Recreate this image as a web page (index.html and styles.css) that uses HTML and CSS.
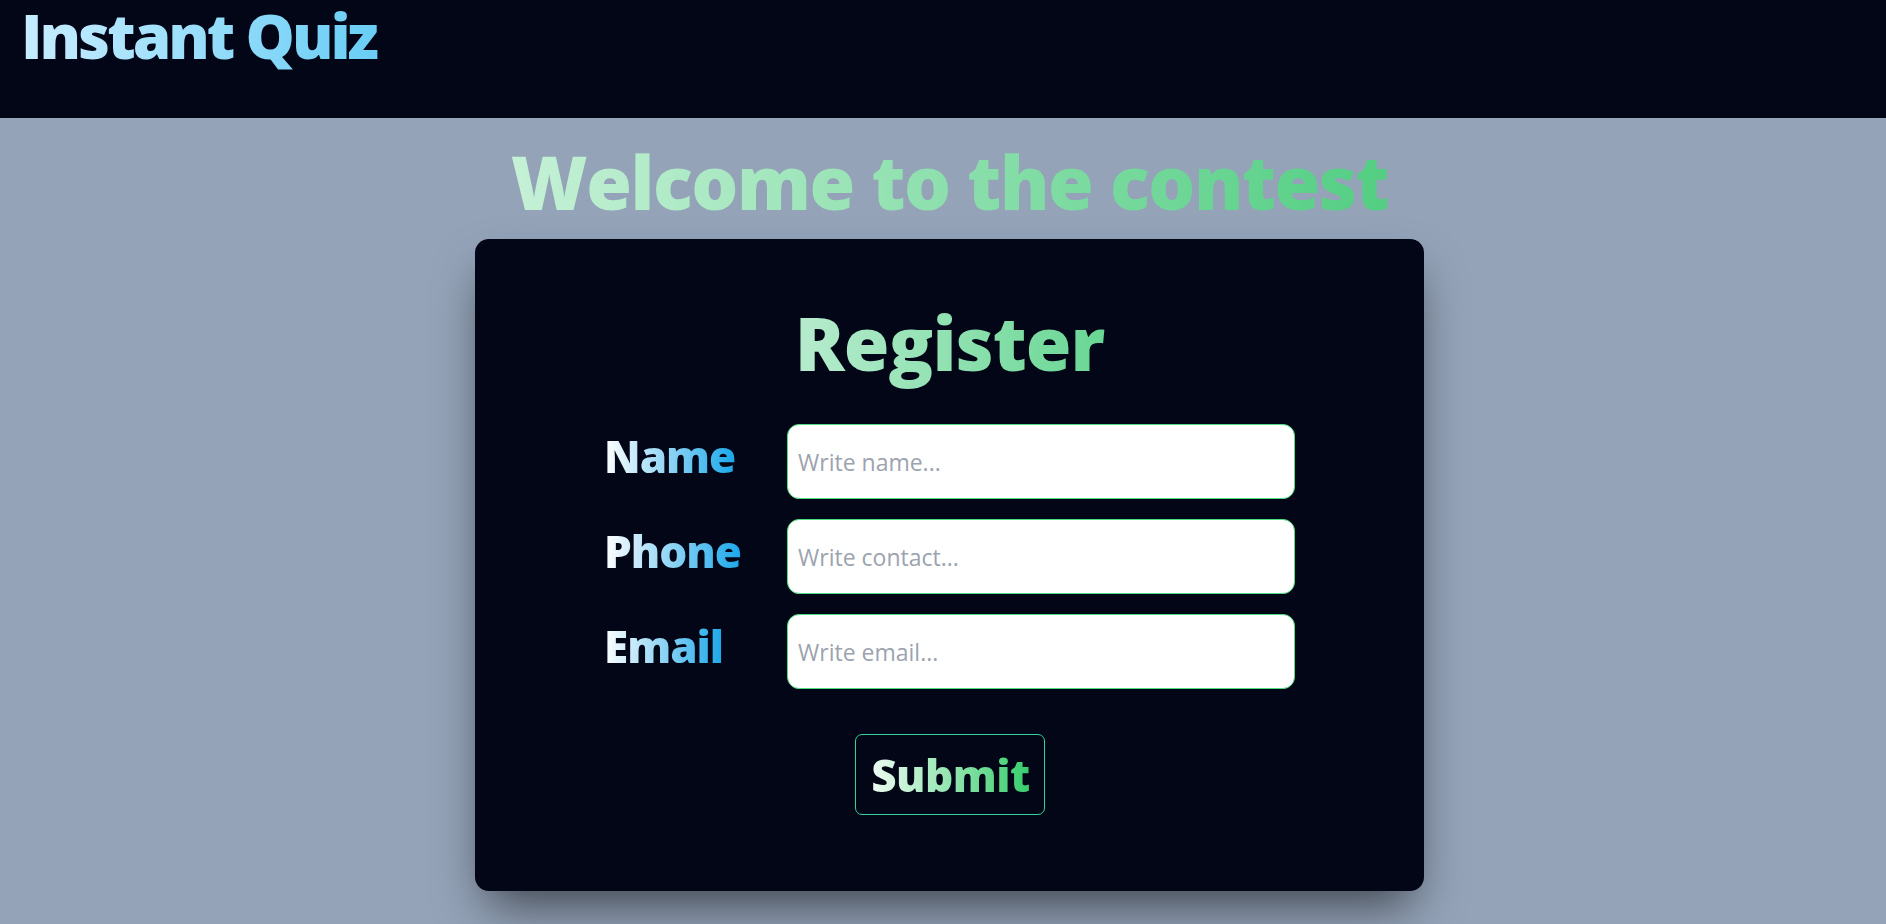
FILE: index.html
```html
<!DOCTYPE html>
<html lang="en">
<head>
<meta charset="utf-8">
<title>Instant Quiz</title>
<link rel="stylesheet" href="styles.css">
</head>
<body>
<header class="topbar">
  <h1 class="brand">Instant Quiz</h1>
</header>
<main class="main">
  <h2 class="welcome">Welcome to the contest</h2>
  <section class="card">
    <h2 class="card-title">Register</h2>
    <form class="form">
      <label class="label" for="name">Name</label>
      <input class="field" id="name" type="text" placeholder="Write name...">
      <label class="label" for="phone">Phone</label>
      <input class="field" id="phone" type="text" placeholder="Write contact...">
      <label class="label" for="email">Email</label>
      <input class="field" id="email" type="text" placeholder="Write email...">
    </form>
    <button class="submit" type="button"><span class="submit-text">Submit</span></button>
  </section>
</main>
</body>
</html>
```
FILE: styles.css
```css
* { box-sizing: border-box; }

body {
  margin: 0;
  background: #94a3b8;
  font-family: "Open Sans", "Noto Sans", sans-serif;
  min-height: 924px;
}

.topbar {
  height: 118px;
  background: #020617;
  padding: 4px 0 0 21px;
}

.brand {
  margin: 0;
  display: inline-block;
  font-size: 62px;
  line-height: 1;
  padding: 0 6px 14px 0;
  font-weight: 800;
  letter-spacing: -3px;
  background: linear-gradient(to right, #c8edff, #68cdf5);
  -webkit-background-clip: text;
  background-clip: text;
  color: transparent;
}

.main {
  display: flex;
  flex-direction: column;
  align-items: center;
  padding-left: 13px;
}

.welcome {
  margin: 27px 0 8px;
  padding: 0 4px 12px;
  font-size: 74px;
  line-height: 1;
  font-weight: 800;
  letter-spacing: -1.5px;
  background: linear-gradient(to right, #c6f1d7, #52ce82);
  -webkit-background-clip: text;
  background-clip: text;
  color: transparent;
}

.card {
  width: 949px;
  background: #020617;
  border-radius: 14px;
  box-shadow: 0 25px 50px -12px rgba(0, 0, 0, 0.6);
  padding: 67px 0 76px;
  display: flex;
  flex-direction: column;
  align-items: center;
}

.card-title {
  margin: 0 0 30px;
  padding: 0 4px 14px;
  font-size: 74px;
  line-height: 1;
  font-weight: 800;
  letter-spacing: -1px;
  background: linear-gradient(to right, #b8eccf, #68d693);
  -webkit-background-clip: text;
  background-clip: text;
  color: transparent;
}

.form {
  display: grid;
  grid-template-columns: 183px 508px;
  row-gap: 20px;
  align-items: center;
}

.label {
  justify-self: start;
  font-size: 44px;
  line-height: 1;
  font-weight: 800;
  letter-spacing: -1px;
  padding: 0 3px 12px 0;
  background: linear-gradient(to right, #ffffff, #16a6e9);
  -webkit-background-clip: text;
  background-clip: text;
  color: transparent;
}

.field {
  height: 75px;
  width: 508px;
  border: 1px solid #4ade80;
  border-radius: 12px;
  background: #ffffff;
  padding: 0 10px;
  font-family: "Open Sans", "Noto Sans", sans-serif;
  font-size: 23px;
  color: #111827;
  outline: none;
}

.field::placeholder {
  color: #9ca3af;
}

.submit {
  margin-top: 45px;
  width: 190px;
  height: 81px;
  border: 1px solid #34d399;
  border-radius: 7px;
  background: transparent;
  padding: 0 0 0 2px;
  cursor: pointer;
}

.submit-text {
  display: inline-block;
  font-family: "Open Sans", "Noto Sans", sans-serif;
  font-size: 44px;
  line-height: 1;
  font-weight: 800;
  letter-spacing: -0.5px;
  padding: 6px 2px 6px;
  background: linear-gradient(to right, #f0fdf4, #34cc6a);
  -webkit-background-clip: text;
  background-clip: text;
  color: transparent;
}
```
